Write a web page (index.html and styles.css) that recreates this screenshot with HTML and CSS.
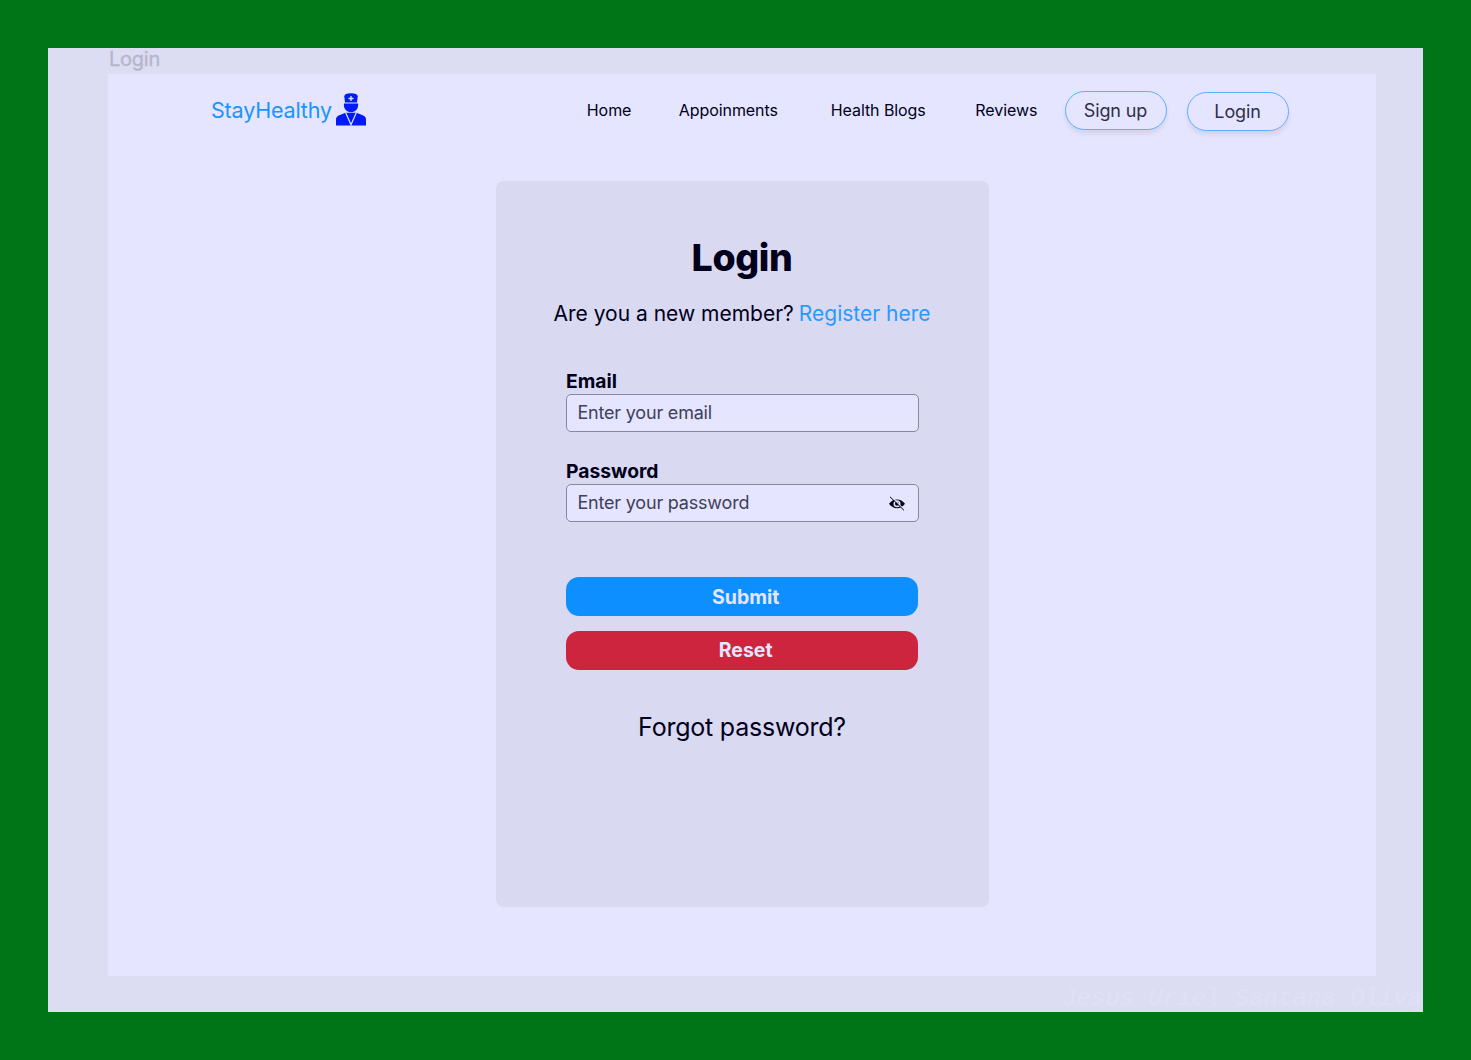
FILE: index.html
```html
<!DOCTYPE html>
<html lang="en">
<head>
<meta charset="utf-8">
<title>StayHealthy – Login</title>
<link rel="stylesheet" href="styles.css">
</head>
<body>
<div class="canvas">
  <div class="frame-label">Login</div>
  <div class="page">
    <header class="header">
      <a class="brand"><span class="brand-name">StayHealthy</span>
        <svg class="doctor" viewBox="0 0 30 33" width="30" height="33">
          <path fill="#0019ff" d="M9 9.400 8.300 3.200Q8.500.3 15 .2q6.500.1 6.700 3L21 9.400Z"/>
          <path fill="#0019ff" d="M8 10.600h14c.8 5.200-2.500 8.600-7 8.600s-7.800-3.400-7-8.600Z"/>
          <path fill="#0019ff" d="M0 32.500v-6q0-3.300 4-4.500l5.500-2.200h11L26 22q4 1.200 4 4.500v6Z"/>
          <path fill="none" stroke="#e5e5ff" stroke-width="1.200" d="m9.600 19.400 5.400 12.400 5.400-12.400"/>
          <path stroke="#e5e5ff" stroke-width="1.300" d="M15 3v5M12.500 5.500h5"/>
        </svg>
      </a>
      <nav class="nav">
        <a class="link home">Home</a>
        <a class="link appointments">Appoinments</a>
        <a class="link blogs">Health Blogs</a>
        <a class="link reviews">Reviews</a>
        <a class="pill">Sign up</a>
        <a class="pill pill-login">Login</a>
      </nav>
    </header>
    <main class="card">
      <h1 class="title">Login</h1>
      <p class="subtitle"><span>Are you a new member?</span><a class="register">Register here</a></p>
      <form class="form">
        <label class="label">Email</label>
        <div class="field"><span class="hint">Enter your email</span></div>
        <label class="label label-password">Password</label>
        <div class="field"><span class="hint">Enter your password</span>
          <svg class="eye" viewBox="0 0 18 15" width="18" height="15">
            <path fill="#00001a" fill-rule="evenodd" d="M1 7.800Q4.300 3.400 9 3.400t8 4.400Q13.700 12.200 9 12.200T1 7.800Zm8-3.500a3.500 3.500 0 1 0 0 7 3.500 3.500 0 0 0 0-7Z"/>
            <circle cx="9" cy="7.800" r="2" fill="#00001a"/>
            <path stroke="#e5e5ff" stroke-width="1.300" d="m3.200.4 13 13.500"/>
            <path stroke="#00001a" stroke-width="1" d="m2 .8 14 13.500"/>
          </svg>
        </div>
        <div class="button submit"><span>Submit</span></div>
        <div class="button reset"><span>Reset</span></div>
      </form>
      <a class="forgot">Forgot password?</a>
    </main>
  </div>
  <div class="author">Jesus Uriel Santana Oliva</div>
</div>
</body>
</html>
```

FILE: styles.css
```css
* { box-sizing: border-box; }
body {
  margin: 0;
  height: 1060px;
  padding: 48px;
  overflow: hidden;
  background: #007518;
  color: #00001a;
  font-family: Inter, "Liberation Sans", sans-serif;
}
.canvas {
  width: 1375px;
  height: 964px;
  overflow: hidden;
  background: #dcdcf3;
}
.frame-label {
  height: 25.500px;
  padding-left: 61px;
  color: #b5b5cc;
  font-size: 20px;
  letter-spacing: -.25px;
  -webkit-text-stroke: .3px #b5b5cc;
  line-height: 22px;
}
.page {
  width: 1268px;
  height: 902.500px;
  margin-left: 60px;
  background: #e5e5ff;
}
.header {
  display: flex;
  height: 107.500px;
  padding: 17.500px 87.500px 0 103px;
}
.brand {
  display: flex;
  gap: 5px;
  height: 36px;
  color: #1a94ff;
  font-size: 21.500px;
  letter-spacing: -.17px;
  line-height: 38px;
}
.brand-name { width: 120px; white-space: nowrap; }
.doctor { margin-top: 2px; }
.nav { display: flex; margin-left: auto; white-space: nowrap; }
.link { font-size: 16px; letter-spacing: -.08px; line-height: 39px; }
.home { width: 92px; }
.appointments { width: 152px; }
.blogs { width: 144.500px; }
.reviews { width: 89.200px; }
.pill {
  width: 102px;
  height: 39px;
  border: 1.500px solid #5caeff;
  border-radius: 20px;
  color: #2f2f49;
  font-size: 18px;
  letter-spacing: -.15px;
  line-height: 38px;
  text-align: center;
  box-shadow: 0 4px 4px rgb(0 0 50 / 8%);
}
.pill-login { margin: 1px 0 0 20px; }
.card {
  width: 493px;
  height: 726px;
  margin-left: 387.500px;
  padding-top: 54px;
  border-radius: 8px;
  background: #d9d9f1;
}
.title {
  margin: 0;
  font-size: 37.500px;
  font-weight: 800;
  letter-spacing: -.4px;
  line-height: 46px;
  text-align: center;
}
.subtitle {
  display: flex;
  justify-content: center;
  gap: 5px;
  margin: 16px 0 0;
  font-size: 21px;
  line-height: 33px;
  white-space: nowrap;
}
.register { color: #2999ff; }
.form { margin: 40px 70px 0; }
.label {
  display: block;
  height: 24px;
  padding-left: .5px;
  font-size: 19.300px;
  font-weight: 700;
  line-height: 22px;
}
.label-password { margin-top: 28px; }
.field {
  display: flex;
  justify-content: space-between;
  width: 353px;
  height: 38px;
  padding: 0 12px 0 11px;
  border: 1px solid #8787a0;
  border-radius: 5px;
  background: #e5e5ff;
  color: #40405a;
  font-size: 18px;
  letter-spacing: -.2px;
  line-height: 35px;
}
.eye { margin-top: 11px; }
.button {
  width: 352.400px;
  height: 39px;
  border-radius: 13px;
  color: #e5e5ff;
  font-size: 19.500px;
  font-weight: 700;
  line-height: 41px;
  text-align: center;
}
.submit { margin-top: 55px; padding-left: 8px; background: #0d8fff; }
.reset { margin-top: 15px; padding-left: 8px; background: #cc253d; line-height: 38px; }
.forgot {
  display: block;
  margin-top: 37px;
  font-size: 25px;
  letter-spacing: -.22px;
  line-height: 40px;
  text-align: center;
}
.author {
  margin-top: 8px;
  padding-left: 1014px;
  color: #e0e0f8;
  font: italic 24px/30px "Liberation Mono", monospace;
  white-space: nowrap;
}
```
